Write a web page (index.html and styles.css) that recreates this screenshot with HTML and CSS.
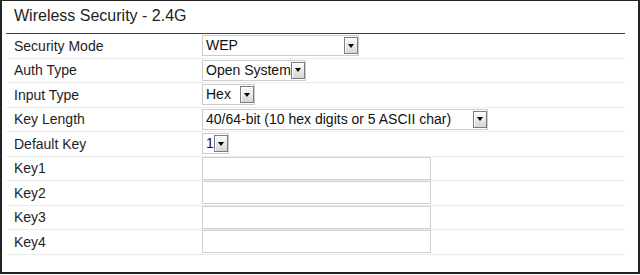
FILE: index.html
```html
<!DOCTYPE html>
<html>
<head>
<meta charset="utf-8">
<title>Wireless Security - 2.4G</title>
<link rel="stylesheet" href="styles.css">
</head>
<body>
<div class="panel">
  <div class="title">Wireless Security - 2.4G</div>
  <div class="rows">
    <div class="row">
      <div class="label">Security Mode</div>
      <div class="select w-mode"><span class="val">WEP</span><span class="btn"></span></div>
    </div>
    <div class="row">
      <div class="label">Auth Type</div>
      <div class="select w-auth"><span class="val">Open System</span><span class="btn"></span></div>
    </div>
    <div class="row">
      <div class="label">Input Type</div>
      <div class="select w-input"><span class="val">Hex</span><span class="btn"></span></div>
    </div>
    <div class="row">
      <div class="label">Key Length</div>
      <div class="select w-len"><span class="val">40/64-bit (10 hex digits or 5 ASCII char)</span><span class="btn"></span></div>
    </div>
    <div class="row">
      <div class="label">Default Key</div>
      <div class="select w-def"><span class="val">1</span><span class="btn"></span></div>
    </div>
    <div class="row">
      <div class="label">Key1</div>
      <input class="text" type="text">
    </div>
    <div class="row">
      <div class="label">Key2</div>
      <input class="text" type="text">
    </div>
    <div class="row">
      <div class="label">Key3</div>
      <input class="text" type="text">
    </div>
    <div class="row">
      <div class="label">Key4</div>
      <input class="text" type="text">
    </div>
  </div>
</div>
</body>
</html>
```

FILE: styles.css
```css
html, body {
  margin: 0;
  padding: 0;
  background: #ffffff;
}

body {
  font-family: "Liberation Sans", Arial, sans-serif;
  color: #1e1e1e;
}

.panel {
  box-sizing: border-box;
  width: 640px;
  height: 274px;
  border: 2px solid #222222;
  border-top-width: 1px;
  padding: 0 13px 0 4px;
  background: #ffffff;
}

.title {
  font-size: 16px;
  line-height: 22px;
  padding: 4px 8px 6px;
  border-bottom: 1px solid #2e3d7c;
}

.rows {
  display: flex;
  flex-direction: column;
}

.row {
  box-sizing: border-box;
  height: 24.5px;
  display: grid;
  grid-template-columns: 196px 1fr;
  align-items: center;
  border-bottom: 1px solid #ececec;
}

.label {
  font-size: 14px;
  padding-left: 8px;
  line-height: 16px;
}

.select {
  box-sizing: border-box;
  display: flex;
  height: 21px;
  border: 1px solid #cccccc;
  padding: 1px 0 1px 0;
  background: #ffffff;
  font-size: 14px;
}

.select .val {
  flex: 1;
  padding-left: 3px;
  line-height: 17px;
  white-space: nowrap;
  overflow: hidden;
  color: #111111;
}

.select .btn {
  box-sizing: border-box;
  width: 14px;
  border: 1px solid #7c7c7c;
  background: linear-gradient(#fbfbfb, #d6d6d6);
  box-shadow: inset 1px 1px 0 #ffffff;
  display: flex;
  align-items: center;
  justify-content: center;
}

.select .btn::after {
  content: "";
  width: 0;
  height: 0;
  border-left: 3.5px solid transparent;
  border-right: 3.5px solid transparent;
  border-top: 4px solid #000000;
}

.w-mode { width: 157px; }
.w-auth { width: 104px; }
.w-input { width: 53px; }
.w-len { width: 286px; }
.w-def { width: 27px; }

.text {
  box-sizing: border-box;
  width: 229px;
  height: 23px;
  margin: 0;
  border: 1px solid #d0d0d0;
  background: #ffffff;
  padding: 0 3px;
  font-family: "Liberation Sans", Arial, sans-serif;
  font-size: 14px;
  outline: none;
}
```
